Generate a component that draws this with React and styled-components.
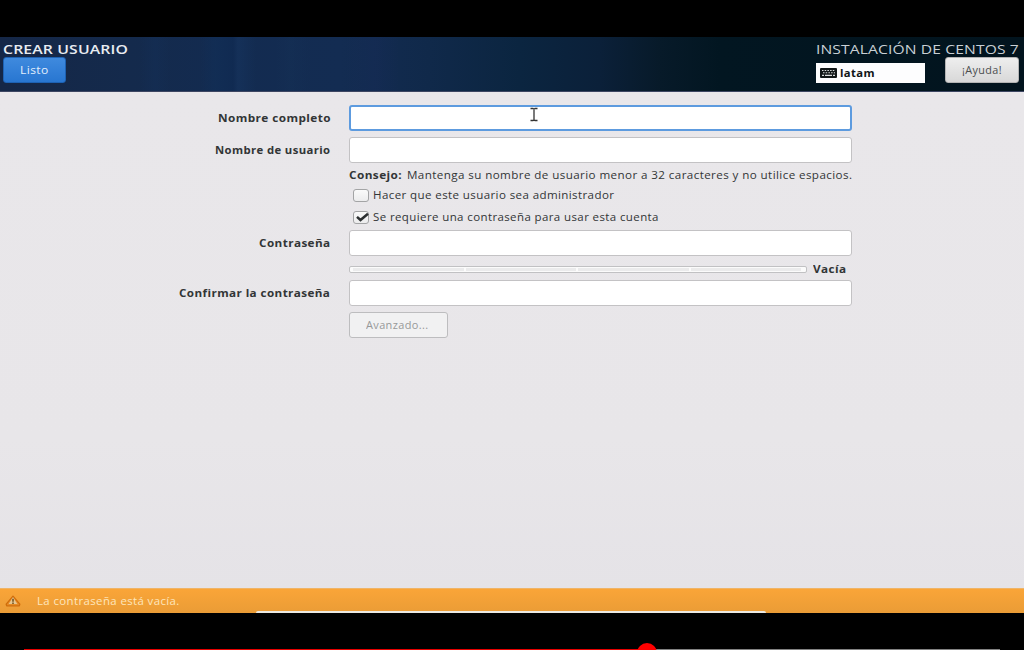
import React, { useLayoutEffect, useRef, useState } from 'react';
import styled, { createGlobalStyle, css } from 'styled-components';

const GlobalStyle = createGlobalStyle`
  * { box-sizing: border-box; }
  html, body { margin: 0; background: #000; overflow: hidden; }
  body { font-family: "Open Sans", "Noto Sans", sans-serif; font-size: 10.2px; color: #323536; }
  button, input { font: inherit; color: inherit; margin: 0; }
`;

const Screen = styled.div`
  width: 1024px;
  height: 650px;
  padding-top: 37px;
  display: flex;
  flex-direction: column;
  overflow: hidden;
  background: #000;
`;

const Header = styled.header`
  height: 55px;
  flex: none;
  display: flex;
  justify-content: space-between;
  padding: 4px 5px 0 3px;
  border-bottom: 1px solid #3d4662;
  background:
    linear-gradient(90deg, transparent 140px, #14305960 155px, transparent 170px, transparent 200px, #10305a70 215px, #0d2a5470 233px, #17376370 238px, transparent 256px, transparent 275px, #15315660 290px, transparent 310px, transparent 345px, #172b5860 375px, transparent 400px),
    linear-gradient(90deg, #152747 0, #142a4c 130px, #132b50 220px, #132c52 340px, #10294a 430px, #0b2540 520px, #0b2039 600px, #071a29 660px, #021621 720px, #02141e 100%);
`;

const HeaderSide = styled.div`
  display: flex;
  flex-direction: column;
  align-items: ${(p) => (p.$end ? 'flex-end' : 'flex-start')};
`;

const Title = styled.h1`
  margin: 0;
  height: 16px;
  font-size: 13px;
  font-weight: ${(p) => (p.$bold ? 600 : 400)};
  color: ${(p) => (p.$bold ? '#e8ecf2' : '#c9d0d5')};
`;

const HeaderTools = styled.div`
  display: flex;
  gap: 20px;
  align-items: flex-start;
`;

const HeaderButton = styled.button`
  display: flex;
  align-items: center;
  justify-content: center;
  height: 26px;
  padding: 0 1px 0 0;
  border-radius: 3px;
  ${(p) =>
    p.$primary
      ? css`
          width: 63px;
          color: #e2effc;
          border: 1px solid #1d62b4;
          background: linear-gradient(#3f8ade, #2876d1);
        `
      : css`
          width: 74px;
          color: #4b4d4e;
          border: 1px solid #b4b4b4;
          background: linear-gradient(#eeeeee, #d8d8d8);
        `}
`;

const Keyboard = styled.div`
  display: flex;
  align-items: center;
  gap: 3px;
  width: 109px;
  height: 20px;
  margin-top: 6px;
  padding-left: 4px;
  background: #fdfdfe;
  color: #101416;
  font-weight: 700;
`;

const Main = styled.main`
  height: 496px;
  flex: none;
  padding-top: 13px;
  background: linear-gradient(#e9e7ea, #e8e6e9 70%, #e5e3e7);
`;

const Row = styled.div`
  display: grid;
  grid-template-columns: 330px 503px;
  column-gap: 19px;
  align-items: center;
  height: ${(p) => p.$h || 26}px;
  margin-bottom: ${(p) => p.$after || 0}px;
`;

const Label = styled.label`
  display: flex;
  justify-content: flex-end;
  padding-bottom: 1px;
  font-weight: 700;
`;

const Field = styled.div`
  position: relative;
  display: flex;
`;

const Input = styled.input`
  width: 503px;
  height: 26px;
  padding: 0 6px;
  border: 1px solid #c3c2c4;
  border-radius: 3px;
  background: #fff;
  outline: none;
  ${(p) =>
    p.$active &&
    css`
      border: 2px solid #5d9bdf;
    `}
`;

const Cursor = styled.svg`
  position: absolute;
  left: 180px;
  top: 2px;
`;

const Tip = styled.div`
  display: flex;
  justify-content: space-between;
  padding-bottom: 1px;
`;

const CheckLine = styled.div`
  display: flex;
  align-items: center;
  gap: 4px;
  padding: 0 0 1px 4px;
`;

const Box = styled.span`
  display: block;
  width: 16px;
  height: 13px;
  border: 1px solid #a3a4a5;
  border-radius: 3px;
  background: linear-gradient(#fafafa, #ececed);
  svg { display: block; overflow: visible; }
`;

const Strength = styled.div`
  display: flex;
  align-items: center;
  gap: 6px;
  font-weight: 700;
`;

const Meter = styled.div`
  display: grid;
  grid-template-columns: repeat(4, 1fr);
  gap: 2px;
  width: 458px;
  height: 7px;
  padding: 1px 5px 1px 3px;
  border: 1px solid #c1c1c3;
  border-radius: 2px;
  background: #fbfbfb;
  i { background: #ebebec; }
`;

const Advanced = styled.button`
  width: 99px;
  height: 26px;
  padding: 0 3px 0 0;
  display: flex;
  align-items: center;
  justify-content: center;
  color: #979999;
  border: 1px solid #bdbdbf;
  border-radius: 3px;
  background: #f1f1f2;
`;

const Warning = styled.div`
  position: relative;
  flex: none;
  height: 25px;
  display: flex;
  align-items: center;
  gap: 16px;
  padding-left: 5px;
  color: #fde6bd;
  border-top: 1px solid #efb467;
  background: linear-gradient(#faa538, #ea9c36);
`;

const Sheet = styled.div`
  position: absolute;
  left: 256px;
  bottom: 0;
  width: 510px;
  height: 2px;
  border-radius: 6px 6px 0 0;
  background: #ebe9e3;
`;

const Player = styled.div`
  position: relative;
  flex: 1;
  display: flex;
  align-items: flex-end;
  padding: 0 24px;
`;

const Track = styled.div`
  width: 976px;
  height: 1px;
  background: linear-gradient(90deg, #e60000 623px, #828282 623px);
`;

const Knob = styled.div`
  position: absolute;
  left: 637px;
  top: 30px;
  width: 20px;
  height: 20px;
  border-radius: 50%;
  background: #f00;
`;

const FitBox = styled.span`
  display: block;
  flex: none;
  width: ${(p) => p.$width}px;
  height: 16px;
  line-height: 16px;
  text-align: left;
  white-space: nowrap;
  font-weight: ${(p) => (p.$bold ? 700 : 'inherit')};
`;

const FitInner = styled.span`
  display: inline-block;
  transform-origin: 0 50%;
  letter-spacing: ${(p) => p.$spacing}px;
`;

/* Widened lettering: stretches its text to the given width. */
function Wide({ width, bold, spacing = 0.35, children }) {
  const ref = useRef(null);
  const [scale, setScale] = useState(1);
  useLayoutEffect(() => {
    setScale(width / (ref.current.offsetWidth - spacing));
  }, [width, spacing]);
  return (
    <FitBox $width={width} $bold={bold}>
      <FitInner ref={ref} $spacing={spacing} style={{ transform: `scaleX(${scale})` }}>
        {children}
      </FitInner>
    </FitBox>
  );
}

function KeyboardIcon() {
  return (
    <svg width="17" height="10" viewBox="0 0 17 10">
      <rect width="17" height="10" rx="1" fill="#111718" />
      <path d="M2 2.5h13M3 4.7h12" stroke="#d9dcdc" strokeWidth="1.1" strokeDasharray="1.5 1.2" />
      <path d="M2 7.4h2M5 7.4h7M13 7.4h2" stroke="#d9dcdc" strokeWidth="1.1" />
    </svg>
  );
}

function WarningIcon() {
  return (
    <svg width="16" height="12" viewBox="0 0 16 12">
      <path d="M8 1.2 14.8 9.2 14.3 10.8H1.7L1.2 9.2Z" fill="#e58a24" stroke="#cf6d0c" strokeWidth="1.3" strokeLinejoin="round" />
      <path d="M8 2 12.3 8.9H3.7Z" fill="#e6c58e" />
      <path d="M8 3.8v3M8 7.6v1.5" stroke="#80602f" strokeWidth="1.8" />
    </svg>
  );
}

export default function App() {
  return (
    <Screen>
      <GlobalStyle />
      <Header>
        <HeaderSide>
          <Title $bold><Wide width={125} spacing={0.1}>CREAR USUARIO</Wide></Title>
          <HeaderButton $primary><Wide width={28}>Listo</Wide></HeaderButton>
        </HeaderSide>
        <HeaderSide $end>
          <Title><Wide width={203} spacing={0.1}>INSTALACIÓN DE CENTOS 7</Wide></Title>
          <HeaderTools>
            <Keyboard><KeyboardIcon /><Wide width={35}>latam</Wide></Keyboard>
            <HeaderButton><Wide width={40}>¡Ayuda!</Wide></HeaderButton>
          </HeaderTools>
        </HeaderSide>
      </Header>

      <Main>
        <Row $after={6}>
          <Label><Wide width={112}>Nombre completo</Wide></Label>
          <Field>
            <Input $active />
            <Cursor width="10" height="16" viewBox="0 0 10 16">
              <path d="M1.5 1.5H4L5 2.2 6 1.5H8.5M5 2v11M1.5 13.5H4L5 12.8 6 13.5H8.5" fill="none" stroke="#fff" strokeWidth="3" />
              <path d="M1.5 1.5H4L5 2.2 6 1.5H8.5M5 2v11M1.5 13.5H4L5 12.8 6 13.5H8.5" fill="none" stroke="#333" strokeWidth="1.3" />
            </Cursor>
          </Field>
        </Row>
        <Row $after={4}>
          <Label><Wide width={115}>Nombre de usuario</Wide></Label>
          <Input />
        </Row>
        <Row $h={16} $after={4}>
          <span />
          <Tip>
            <Wide width={53} bold>Consejo:</Wide>
            <Wide width={445}>Mantenga su nombre de usuario menor a 32 caracteres y no utilice espacios.</Wide>
          </Tip>
        </Row>
        <Row $h={16} $after={6}>
          <span />
          <CheckLine>
            <Box />
            <Wide width={241}>Hacer que este usuario sea administrador</Wide>
          </CheckLine>
        </Row>
        <Row $h={15} $after={6}>
          <span />
          <CheckLine>
            <Box>
              <svg width="14" height="11" viewBox="0 0 14 11">
                <path d="M3 4.8 6.5 8 14 1.8" fill="none" stroke="#2c3031" strokeWidth="2.5" />
              </svg>
            </Box>
            <Wide width={285}>Se requiere una contraseña para usar esta cuenta</Wide>
          </CheckLine>
        </Row>
        <Row $after={5}>
          <Label><Wide width={71}>Contraseña</Wide></Label>
          <Input />
        </Row>
        <Row $h={15} $after={4}>
          <span />
          <Strength>
            <Meter><i /><i /><i /><i /></Meter>
            <Wide width={33}>Vacía</Wide>
          </Strength>
        </Row>
        <Row $after={6}>
          <Label><Wide width={151}>Confirmar la contraseña</Wide></Label>
          <Input />
        </Row>
        <Row>
          <span />
          <Advanced><Wide width={62}>Avanzado...</Wide></Advanced>
        </Row>
      </Main>

      <Warning>
        <WarningIcon />
        <Wide width={142}>La contraseña está vacía.</Wide>
        <Sheet />
      </Warning>
      <Player>
        <Track />
        <Knob />
      </Player>
    </Screen>
  );
}
